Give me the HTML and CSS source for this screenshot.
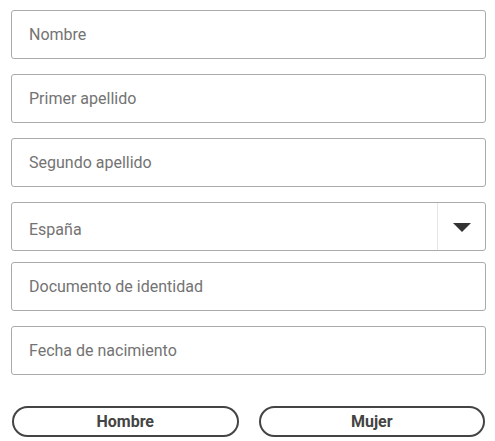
FILE: index.html
```html
<!DOCTYPE html>
<html lang="es">
<head>
<meta charset="utf-8">
<link rel="stylesheet" href="styles.css">
</head>
<body>
<form class="form">
  <div class="field"><span class="ph">Nombre</span></div>
  <div class="field"><span class="ph">Primer apellido</span></div>
  <div class="field"><span class="ph">Segundo apellido</span></div>
  <div class="field select">
    <span class="ph select-text">España</span>
    <span class="arrow-cell">
      <svg width="18" height="9" viewBox="0 0 18 9"><path d="M0 0H18L9 9Z" fill="#333"/></svg>
    </span>
  </div>
  <div class="field"><span class="ph">Documento de identidad</span></div>
  <div class="field"><span class="ph">Fecha de nacimiento</span></div>
  <div class="genders">
    <button type="button" class="gbtn">Hombre</button>
    <button type="button" class="gbtn">Mujer</button>
  </div>
</form>
</body>
</html>
```
FILE: styles.css
```css
* { box-sizing: border-box; }
html, body { margin: 0; padding: 0; background: #fff; }
body { font-family: Roboto, "Open Sans", sans-serif; }
.form {
  width: 495px;
  padding: 10px 9px 0 11px;
  display: flex;
  flex-direction: column;
}
.field {
  height: 49px;
  border: 1px solid #aaa;
  border-radius: 3px;
  display: flex;
  align-items: center;
  padding-left: 17px;
  margin-bottom: 15px;
}
.ph {
  font-size: 16px;
  color: #737373;
}
.select {
  margin-bottom: 11px;
  padding-right: 0;
  align-items: stretch;
}
.select-text {
  flex: 1;
  display: flex;
  align-items: center;
  padding-top: 6px;
}
.arrow-cell {
  width: 48px;
  border-left: 1px solid #e6e6e6;
  display: flex;
  align-items: center;
  justify-content: center;
  padding-top: 2px;
}
.arrow-cell svg { display: block; }
.genders {
  margin-top: 16px;
  display: flex;
  gap: 20px;
  padding: 0 1px;
}
.gbtn {
  flex: 1;
  height: 31px;
  border: 2px solid #444;
  border-radius: 16px;
  background: #fff;
  font-family: Roboto, sans-serif;
  font-weight: 700;
  font-size: 16px;
  color: #444;
  padding: 0;
}
```
